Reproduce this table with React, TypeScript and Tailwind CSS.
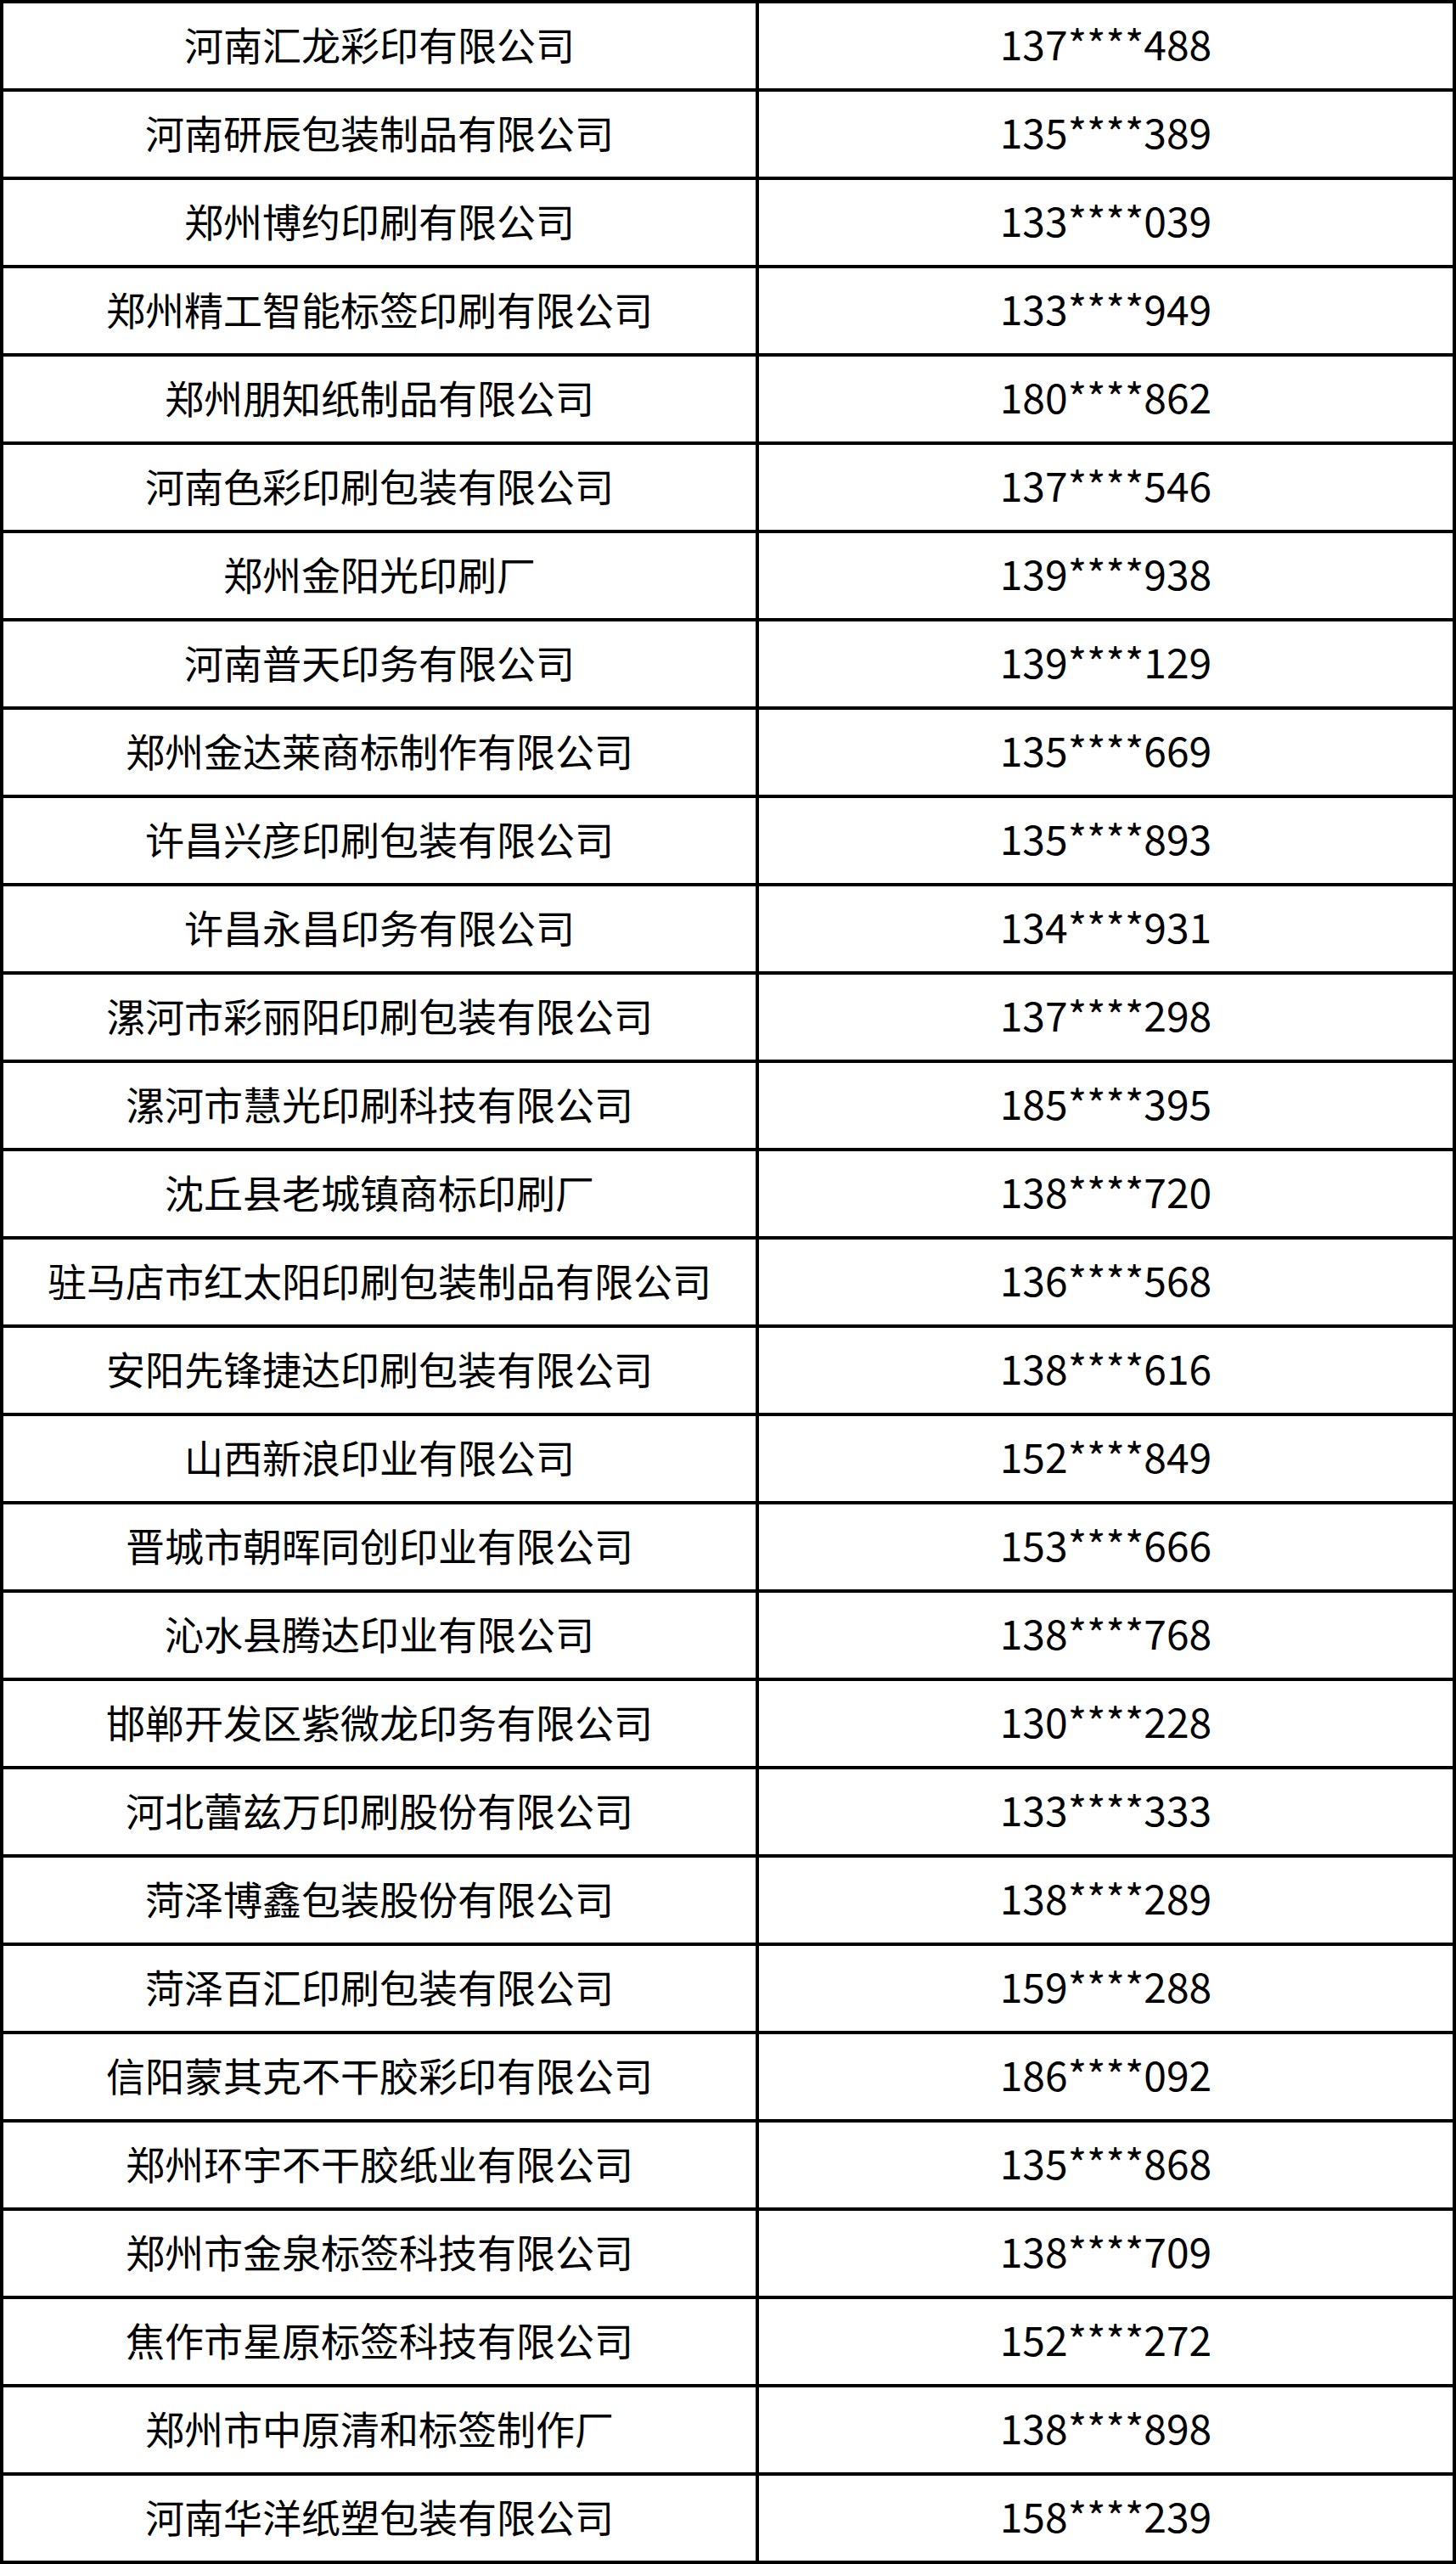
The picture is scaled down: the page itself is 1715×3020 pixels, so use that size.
import React from 'react';

const rows: [string, string][] = [
  ['河南汇龙彩印有限公司', '137****488'],
  ['河南研辰包装制品有限公司', '135****389'],
  ['郑州博约印刷有限公司', '133****039'],
  ['郑州精工智能标签印刷有限公司', '133****949'],
  ['郑州朋知纸制品有限公司', '180****862'],
  ['河南色彩印刷包装有限公司', '137****546'],
  ['郑州金阳光印刷厂', '139****938'],
  ['河南普天印务有限公司', '139****129'],
  ['郑州金达莱商标制作有限公司', '135****669'],
  ['许昌兴彦印刷包装有限公司', '135****893'],
  ['许昌永昌印务有限公司', '134****931'],
  ['漯河市彩丽阳印刷包装有限公司', '137****298'],
  ['漯河市慧光印刷科技有限公司', '185****395'],
  ['沈丘县老城镇商标印刷厂', '138****720'],
  ['驻马店市红太阳印刷包装制品有限公司', '136****568'],
  ['安阳先锋捷达印刷包装有限公司', '138****616'],
  ['山西新浪印业有限公司', '152****849'],
  ['晋城市朝晖同创印业有限公司', '153****666'],
  ['沁水县腾达印业有限公司', '138****768'],
  ['邯郸开发区紫微龙印务有限公司', '130****228'],
  ['河北蕾兹万印刷股份有限公司', '133****333'],
  ['菏泽博鑫包装股份有限公司', '138****289'],
  ['菏泽百汇印刷包装有限公司', '159****288'],
  ['信阳蒙其克不干胶彩印有限公司', '186****092'],
  ['郑州环宇不干胶纸业有限公司', '135****868'],
  ['郑州市金泉标签科技有限公司', '138****709'],
  ['焦作市星原标签科技有限公司', '152****272'],
  ['郑州市中原清和标签制作厂', '138****898'],
  ['河南华洋纸塑包装有限公司', '158****239'],
];

export default function App() {
  return (
    <div className="w-[1715px] bg-white text-black font-['Noto_Sans_CJK_SC',sans-serif]">
      <div className="flex flex-col border-4 border-black">
        {rows.map(([name, phone], i) => (
          <div
            key={name}
            className={`flex ${i < rows.length - 1 ? 'h-[104px] border-b-4 border-black' : 'h-[100px]'}`}
          >
            <div className="w-[890px] shrink-0 border-r-4 border-black flex items-center justify-center pb-[6px] text-[46px] leading-none">
              {name}
            </div>
            <div className="flex-1 flex items-center justify-center pb-[8px] text-[48px] leading-none">
              {phone}
            </div>
          </div>
        ))}
      </div>
    </div>
  );
}
